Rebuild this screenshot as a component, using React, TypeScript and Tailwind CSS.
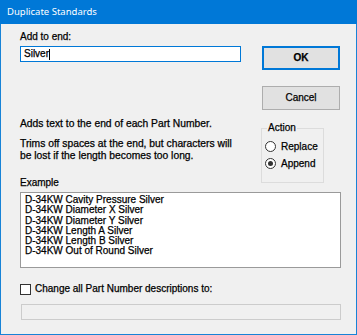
const font = { fontFamily: '"Liberation Sans", Arial, sans-serif' };

const items = [
  'D-34KW Cavity Pressure Silver',
  'D-34KW Diameter X Silver',
  'D-34KW Diameter Y Silver',
  'D-34KW Length A Silver',
  'D-34KW Length B Silver',
  'D-34KW Out of Round Silver',
];

const Radio = ({ label, checked }: { label: string; checked?: boolean }) => (
  <div className="flex items-center h-[17px]">
    <span className="w-[11px] h-[11px] rounded-full border border-[#333] bg-white flex items-center justify-center">
      {checked && <span className="w-[5px] h-[5px] rounded-full bg-[#333]" />}
    </span>
    <span className="ml-[5px]">{label}</span>
  </div>
);

export default function App() {
  return (
    <div
      className="w-[357px] h-[335px] flex flex-col bg-[#f0f0f0] border-x border-b border-[#1883d7] text-black text-[10px] leading-[12px] [-webkit-text-stroke:0.25px_black]"
      style={font}
    >
      <div
        className="h-[24px] -mx-px bg-[#0078d7] text-white text-[9.5px] flex items-center pl-[7px] [-webkit-text-stroke:0px]"
        style={{ fontFamily: '"Noto Sans", "Open Sans", sans-serif' }}
      >
        Duplicate Standards
      </div>

      <div className="flex flex-col pl-[19px] pr-[15px]">
        {/* top row */}
        <div className="flex mt-[7px]">
          <div className="w-[221px] flex flex-col">
            <div className="h-[12px]">Add to end:</div>
            <div className="mt-[3px] h-[16px] border border-[#0078d7] bg-white flex items-center pl-[3px]">
              Silver<span className="w-px h-[11px] bg-black" />
            </div>
          </div>
          <div className="ml-[21px] flex flex-col w-[78px] pt-[15px]">
            <button className="h-[24px] border-2 border-[#0078d7] bg-[#e1e1e1] font-bold text-[10px]">
              OK
            </button>
            <button className="mt-[16px] h-[24px] border border-[#adadad] bg-[#e1e1e1] text-[10px]">
              Cancel
            </button>
          </div>
        </div>

        {/* middle row */}
        <div className="flex mt-[8px]">
          <div className="w-[241px] flex flex-col text-[10.3px]">
            <div>Adds text to the end of each Part Number.</div>
            <div className="mt-[8px]">
              Trims off spaces at the end, but characters will
              <br />
              be lost if the length becomes too long.
            </div>
          </div>
          <div className="relative mt-[10px] w-[63px] h-[55px] border border-[#dcdcdc] pl-[3px] pt-[9px]">
            <span className="absolute -top-[7px] left-[5px] px-[1px] bg-[#f0f0f0]">Action</span>
            <Radio label="Replace" />
            <Radio label="Append" checked />
          </div>
        </div>

        <div className="mt-[-6px]">Example</div>
        <div className="mt-[3px] h-[76px] border border-[#9a9a9a] bg-white pl-[4px] pt-[2px] leading-[10.3px]">
          {items.map((t) => (
            <div key={t}>{t}</div>
          ))}
        </div>

        <div className="flex items-center mt-[15px]">
          <span className="w-[11px] h-[11px] border border-[#333] bg-white" />
          <span className="ml-[4px]">Change all Part Number descriptions to:</span>
        </div>
        <div className="mt-[9px] ml-px h-[16px] border border-[#cccccc] bg-[#f0f0f0]" />
      </div>
    </div>
  );
}
